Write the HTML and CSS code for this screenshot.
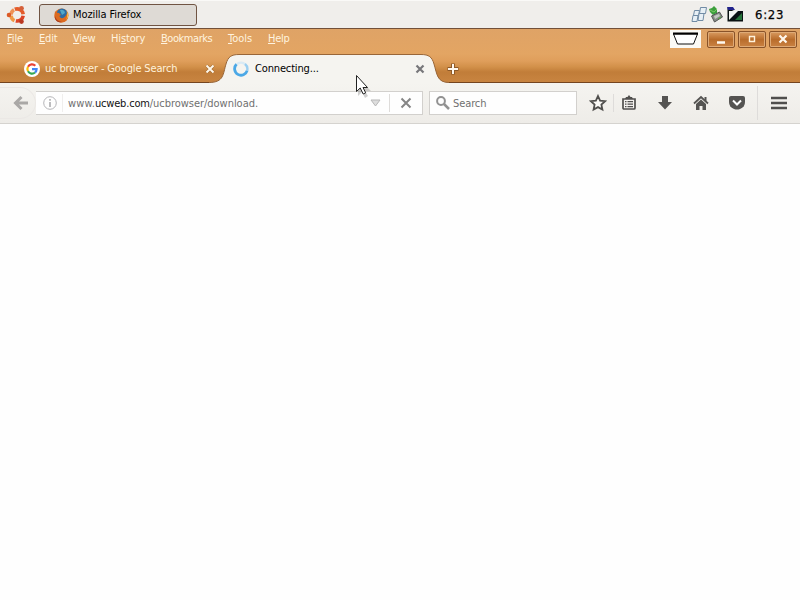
FILE: index.html
```html
<!DOCTYPE html>
<html lang="en">
<head>
<meta charset="utf-8">
<title>Mozilla Firefox</title>
<link rel="stylesheet" href="styles.css">
</head>
<body>
<header class="panel">
  <svg class="start" width="20" height="20" viewBox="0 0 20 20" fill="none" stroke-width="3.6">
    <path d="M5 9.500A6.300 6.300 0 0 1 8 4.800" stroke="#ee9154"/>
    <path d="M8.800 4.300A6.300 6.300 0 0 1 17.200 9.300" stroke="#e45b2a"/>
    <path d="M17.200 10.800A6.300 6.300 0 0 1 9.800 15.900" stroke="#dc4426"/>
    <path d="M8.500 15.700A6.300 6.300 0 0 1 5 10.700" stroke="#f09a45"/>
    <circle cx="3" cy="10" r="2.300" fill="#dc5a26"/><circle cx="15.500" cy="3.300" r="2.400" fill="#d5603a"/><circle cx="15.500" cy="16.600" r="2.300" fill="#b93822"/>
  </svg>
  <div class="task">
    <svg width="15" height="15" viewBox="0 0 15 15"><circle cx="7.5" cy="7.5" r="7" fill="#e8701c"/><circle cx="8" cy="5.800" r="5.400" fill="#2c6da4"/><path d="M6 2Q10 1 11 5L8 7Z" fill="#51a7c8"/><path d="M1 3Q2 5 5 5L7 7Q4 8 7 10Q11 11 13 5Q16 11 10 14Q2 16 .5 9Z" fill="#dc6a20"/><path d="M12.5 3Q16 8 12 12Q14 8 12.5 3" fill="#f8c544"/><path d="M1 8Q2 13 8 14Q2 15 .8 10Z" fill="#a83e22"/></svg>
    <span class="t-task">Mozilla Firefox</span>
  </div>
  <div class="tray">
    <svg width="54" height="20" viewBox="0 0 54 20">
      <g fill="#e7eff5" stroke="#718ba5"><path d="M3.500 5.500h5l-1 5H2.500z"/><path d="M9.500 2.500h6l-1 6h-6z"/><path d="M2 10.500h5l-1 6H1z"/><path d="M8 8.500h5l-1 7H7z"/></g>
      <path d="M18 4l3-1 2-2 3 3v4l-4 2-3-3z" fill="#3c9f3c"/><path d="M19 5l4 2 3-3" stroke="#7bc865" fill="none"/>
      <path d="M20.500 11l8-4 3 5-8 5z" fill="#858b85" stroke="#555"/><path d="M23 11l5-2 1 2-5 3z" fill="#c4c9c2"/><path d="M27 14l3-2" stroke="#52a83c"/>
      <path d="M36.500 3v13.500H52V6H43z" fill="#0a1113"/><path d="M36 2h6l2 3h-7z" fill="#22228c"/><path d="M38 6h9l-9 9z" fill="#f3f5f2"/><path d="M44 15l7-7v7z" fill="#26733a"/>
    </svg>
    <span class="clock">6:23</span>
  </div>
</header>
<div class="chrome">
  <nav class="menu">
    <span class="m1"><u>F</u>ile</span><span class="m2"><u>E</u>dit</span><span class="m3"><u>V</u>iew</span><span class="m4">Hi<u>s</u>tory</span><span class="m5"><u>B</u>ookmarks</span><span class="m6"><u>T</u>ools</span><span class="m7"><u>H</u>elp</span>
    <div class="controls">
      <div class="deskbar"><svg width="31" height="18" viewBox="0 0 31 18"><path d="M3.500 4h24l-4 10h-16z" fill="#fff" stroke="#111"/><path d="M3 3.500h25" stroke="#000" stroke-width="2"/></svg></div>
      <div class="win"><svg width="28" height="16"><path d="M10 11.500h8" stroke="#fffaf0" stroke-width="2.500"/></svg></div>
      <div class="win"><svg width="28" height="16"><path d="M11.500 5.500h5v5h-5z" fill="none" stroke="#fff2dc" stroke-width="1.400"/></svg></div>
      <div class="win"><svg width="28" height="16"><path d="M10.500 4.500l7 7m0-7l-7 7" stroke="#fff8ec" stroke-width="2.200"/></svg></div>
    </div>
  </nav>
  <div class="tabs">
    <div class="tab idle">
      <svg width="16" height="16" viewBox="0 0 16 16"><circle cx="8" cy="8" r="8" fill="#fff"/><g fill="none" stroke-width="2.200"><path d="M4 5.700A4.600 4.600 0 0 1 11.300 4.700" stroke="#e94235"/><path d="M4 5.700A4.600 4.600 0 0 0 4 10.300" stroke="#fbbc05"/><path d="M4 10.300A4.600 4.600 0 0 0 11 11.500" stroke="#34a853"/><path d="M11 11.500A4.600 4.600 0 0 0 12.600 8.200H8" stroke="#4285f4"/></g></svg>
      <span class="t-google">uc browser - Google Search</span>
      <svg class="close" width="10" height="10" viewBox="0 0 10 10"><path d="M1.500 1.500l7 7m0-7l-7 7" stroke="#9b642d" stroke-width="3"/><path d="M1.500 1.500l7 7m0-7l-7 7" stroke="#fff7e9" stroke-width="2"/></svg>
    </div>
    <div class="tab active">
      <svg class="shape" width="244" height="30" viewBox="0 0 244 30"><path d="M0 30V28.500C15 28.500 14 20 17 10C19 3 22 .500 30 .500H212C220 .500 223 3 225 10C228 20 228 28.500 240 28.500V30Z" fill="#f5f4f0"/><path d="M0 28.500C15 28.500 14 20 17 10C19 3 22 .500 30 .500H212C220 .500 223 3 225 10C228 20 228 28.500 240 28.500" fill="none" stroke="#996638"/></svg>
      <svg class="over" width="16" height="16" viewBox="0 0 16 16" fill="none"><circle cx="8" cy="8" r="6.300" stroke="#d9eaf4" stroke-width="2.300"/><path d="M3.500 3.300A6.400 6.400 0 1 0 14.200 9.500" stroke="#4ba8e6" stroke-width="2.800"/><path d="M14.200 9.500A6.400 6.400 0 0 0 12 3" stroke="#9ccff0" stroke-width="2.300"/></svg>
      <span class="t-connect over">Connecting...</span>
      <svg class="close over" width="10" height="10"><path d="M1.500 1.500l7 7m0-7l-7 7" stroke="#77777a" stroke-width="2.200"/></svg>
    </div>
    <svg class="plus" width="12" height="12"><path d="M6 .500v11M.500 6h11" stroke="#8d5928" stroke-width="4"/><path d="M6 1v10M1 6h10" stroke="#fff8ee" stroke-width="2"/></svg>
  </div>
</div>
<div class="toolbar">
  <div class="back"><svg width="16" height="16"><path d="M15 8H3M8.500 2L2.500 8l6 6" fill="none" stroke="#aaa8a6" stroke-width="3"/></svg></div>
  <div class="url">
    <svg class="info" width="14" height="14"><circle cx="7" cy="7" r="6.300" fill="none" stroke="#b5b5b8"/><path d="M7 6v5M7 3v1.700" stroke="#a6a6a9" stroke-width="1.500"/></svg>
    <i class="sep faint"></i>
    <span class="address"><span class="t-www">www.</span><b class="t-domain">ucweb.com</b><span class="t-path">/ucbrowser/download.</span></span>
    <svg class="drop" width="11" height="8"><path d="M1 1h9L5.500 7z" fill="#ddd" stroke="#b7b7b7"/></svg>
    <i class="sep"></i>
    <svg class="stop" width="12" height="12"><path d="M1.500 1.500l9 9m0-9l-9 9" stroke="#858585" stroke-width="2"/></svg>
  </div>
  <div class="search"><svg width="14" height="14"><circle cx="5" cy="5" r="3.900" fill="none" stroke="#929292" stroke-width="2"/><path d="M8 8l5 5" stroke="#929292" stroke-width="2.500"/></svg><span class="t-search">Search</span></div>
  <div class="tools">
    <svg width="18" height="18" viewBox="0 0 18 18"><path d="M9 2l2.100 4.600 5 .6-3.700 3.400 1 5L9 13.100 4.600 15.600l1-5L1.900 7.200l5-.6z" fill="#faf9f6" stroke="#504f4d" stroke-width="1.800"/></svg>
    <i class="sep star-sep"></i>
    <svg width="16" height="16" viewBox="0 0 16 16"><path d="M2 4h12v9q0 1-1 1H3q-1 0-1-1z" fill="#f5f3f0" stroke="#504f4d" stroke-width="1.700"/><path d="M4 4l1-2h1.500L8 0l1.500 2H11l1 2z" fill="#504f4d"/><path d="M4 6.700h1.500m1 0H12M4 9.200h1.500m1 0H12M4 11.700h1.500m1 0H12" stroke="#504f4d" stroke-width="1.200"/></svg>
    <svg class="download" width="16" height="16"><path d="M5 1h6v6h4L8 14.500 1 7h4z" fill="#555452"/></svg>
    <svg class="home" width="16" height="16"><path d="M1 8.500L8 2l7 6.500" fill="none" stroke="#555452" stroke-width="1.800"/><path d="M11.500 2h2v4h-2zM3 9l5-4.500L13 9v6h-3.500v-4h-3v4H3z" fill="#555452"/></svg>
    <svg class="pocket" width="18" height="16"><path d="M1 3q0-2 2-2h12q2 0 2 2v4q0 5-5 7-3 1-6 0-5-2-5-7z" fill="#555452"/><path d="M5 5.500l4 4 4-4" fill="none" stroke="#fff" stroke-width="2"/></svg>
    <i class="sep menu-sep"></i>
    <svg class="burger" width="16" height="16"><path d="M0 3h16M0 8h16M0 13h16" stroke="#504f4d" stroke-width="2.600"/></svg>
  </div>
</div>
<main class="page"></main>
<svg class="cursor" width="18" height="25"><path d="M3 4v18l4-4 3 6 3-2-3-5h6z" fill="#777" opacity=".35"/><path d="M1.500 1.500v16l3.700-3.500 3 6 2.500-1.200-2.700-5.300h4.500z" fill="#fff" stroke="#222"/></svg>
</body>
</html>
```

FILE: styles.css
```css
* { box-sizing: border-box; }
body { margin: 0; width: 800px; height: 600px; overflow: hidden; display: flex; flex-direction: column; background: #fefefe; font: 11px/14px "DejaVu Sans Condensed", "DejaVu Sans", sans-serif; font-stretch: condensed; white-space: nowrap; position: relative; }
svg { display: block; flex-shrink: 0; }
.panel { height: 28px; display: flex; align-items: center; background: #f0eeeb; padding-left: 6px; border-top: 1px solid #faf9f7; }
.task { width: 158px; height: 22px; margin-left: 13px; display: flex; align-items: center; padding: 1px 0 0 14px; gap: 4px; border: 1px solid #705443; border-radius: 3px; background: #dedad5; }
.tray { margin-left: auto; display: flex; align-items: center; padding-right: 14px; }
.clock { width: 31px; margin-left: 10px; font-size: 13px; line-height: 18px; letter-spacing: .7px; -webkit-text-stroke: .25px #111; }
.chrome { height: 55px; border-top: 1px solid #725039; border-bottom: 1px solid #74451f; background: linear-gradient(#dfa366 0, #e3a563 25px, #df9e5b 32px, #d29049 38px, #c17d39 43px, #c98541 54px); }
.menu { height: 25px; display: flex; padding-left: 7px; color: #fff3df; }
.menu > span { margin-top: 3px; }
.menu u { text-underline-offset: 1px; text-decoration-thickness: 1px; }
.m1 { width: 32px; letter-spacing: -.1px; }
.m2 { width: 34px; letter-spacing: -.2px; }
.m3 { width: 38px; letter-spacing: -.3px; }
.m4 { width: 50px; letter-spacing: -.15px; }
.m5 { width: 67px; letter-spacing: -.45px; }
.m6 { width: 40px; letter-spacing: 0; }
.m7 { letter-spacing: -.3px; }
.controls { display: flex; margin-left: auto; padding: 1px 3px 0 0; gap: 3px; }
.deskbar { width: 31px; height: 18px; margin-right: 3px; background: #fbfaf6; }
.win { width: 28px; height: 17px; margin-top: 1px; border: 1px solid #895329; border-radius: 2px; background: linear-gradient(#d99b61, #b86c2b 50%, #cb8343); overflow: hidden; box-shadow: inset 0 0 0 1px #dfab77; }
.win svg { margin: -1px; }
.tabs { height: 29px; display: flex; align-items: center; }
.tab { display: flex; align-items: center; height: 29px; }
.idle { width: 215px; padding-left: 24px; color: #fff2dc; }
.idle span { margin: 1px 0 0 5px; }
.close { margin-left: auto; }
.active { position: relative; width: 230px; padding: 0 20px 0 18px; }
.shape { position: absolute; left: -6px; top: 0; }
.over { position: relative; }
.active .t-connect { margin: 1px 0 0 6px; }
.plus { margin-left: 2px; position: relative; }
.toolbar { height: 41px; display: flex; align-items: center; background: linear-gradient(#f5f4f0, #eeece8); border-bottom: 1px solid #d5d3cf; }
.back { width: 36px; height: 32px; padding: 7px 0 0 13px; border: 1px solid #ebe8e5; border-left: 0; border-radius: 0 16px 16px 0; }
.url { width: 387px; height: 24px; display: flex; align-items: center; border: 1px solid #d2d0cd; border-left: 0; background: #fefefe; }
.info { margin: 0 5px 0 7px; }
.sep { width: 1px; height: 18px; background: #dedcda; flex-shrink: 0; }
.faint { background: #efeeed; }
.address { margin: 1px 0 0 5px; color: #707070; display: flex; }
.address b { color: #111; font-weight: 400; }
.drop { margin: 0 8px 0 auto; }
.stop { margin: 0 10px 0 10px; }
.search { width: 148px; height: 24px; display: flex; align-items: center; margin-left: 6px; padding-left: 6px; gap: 3px; border: 1px solid #d2d0cd; background: #fefefe; color: #707070; }
.tools { flex: 1; display: flex; align-items: center; padding-left: 12px; }
.star-sep { margin: 0 7px 0 6px; }
.download { margin-left: 20px; }
.home { margin-left: 20px; }
.pocket { margin-left: 19px; }
.menu-sep { margin-left: 11px; height: 34px; }
.burger { margin-left: 13px; }
.page { flex: 1; }
.cursor { position: absolute; left: 355px; top: 74px; }
.t-task { letter-spacing: -.1px; }
.t-google { letter-spacing: -.15px; }
.t-connect { letter-spacing: -.15px; }
.t-www { letter-spacing: .15px; }
.t-domain { letter-spacing: -.2px; }
.t-path { letter-spacing: -.03px; }
.t-search { letter-spacing: -.1px; margin-top: 1px; }
```
